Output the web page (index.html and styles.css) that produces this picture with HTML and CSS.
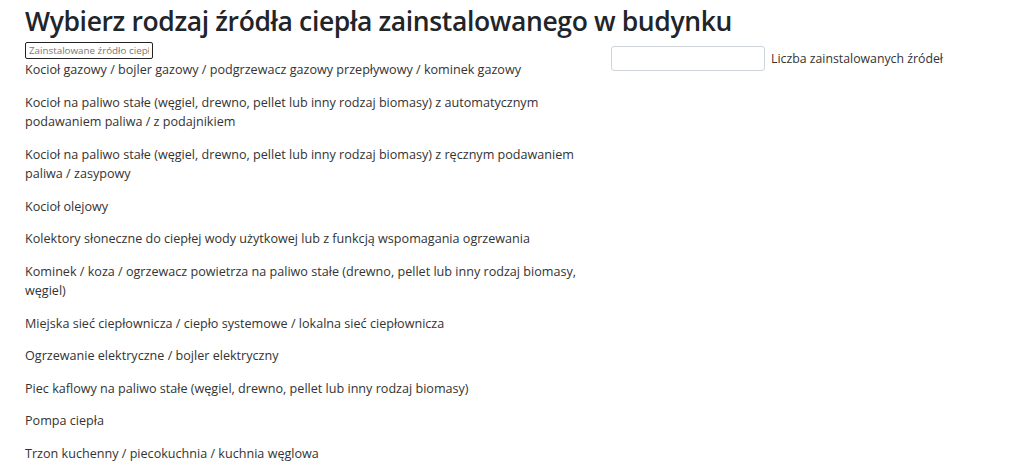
FILE: index.html
```html
<!DOCTYPE html>
<html lang="pl">
<head>
<meta charset="utf-8">
<link rel="stylesheet" href="styles.css">
</head>
<body>
<div class="page">
  <h1 class="title">Wybierz rodzaj źródła ciepła zainstalowanego w budynku</h1>
  <div class="row">
    <div class="col-left">
      <input class="search" type="text" placeholder="Zainstalowane źródło ciepła">
      <ul class="list">
        <li>Kocioł gazowy / bojler gazowy / podgrzewacz gazowy przepływowy / kominek gazowy</li>
        <li>Kocioł na paliwo stałe (węgiel, drewno, pellet lub inny rodzaj biomasy) z automatycznym podawaniem paliwa / z podajnikiem</li>
        <li>Kocioł na paliwo stałe (węgiel, drewno, pellet lub inny rodzaj biomasy) z ręcznym podawaniem paliwa / zasypowy</li>
        <li>Kocioł olejowy</li>
        <li>Kolektory słoneczne do ciepłej wody użytkowej lub z funkcją wspomagania ogrzewania</li>
        <li>Kominek / koza / ogrzewacz powietrza na paliwo stałe (drewno, pellet lub inny rodzaj biomasy, węgiel)</li>
        <li>Miejska sieć ciepłownicza / ciepło systemowe / lokalna sieć ciepłownicza</li>
        <li>Ogrzewanie elektryczne / bojler elektryczny</li>
        <li>Piec kaflowy na paliwo stałe (węgiel, drewno, pellet lub inny rodzaj biomasy)</li>
        <li>Pompa ciepła</li>
        <li>Trzon kuchenny / piecokuchnia / kuchnia węglowa</li>
      </ul>
    </div>
    <div class="col-right">
      <input class="count" type="text">
      <label class="count-label">Liczba zainstalowanych źródeł</label>
    </div>
  </div>
</div>
</body>
</html>
```
FILE: styles.css
```css
html, body {
  margin: 0;
  padding: 0;
  background: #ffffff;
}
body {
  font-family: "Open Sans", "Noto Sans", sans-serif;
  color: #212529;
}
.page {
  padding: 0 0 0 25px;
}
.title {
  margin: 0;
  padding-top: 4px;
  font-size: 26.5px;
  font-weight: 600;
  line-height: 34px;
  color: #212529;
  letter-spacing: -0.37px;
}
.row {
  display: flex;
  align-items: flex-start;
}
.col-left {
  width: 568px;
  flex: none;
}
.col-right {
  margin-left: 18px;
  padding-top: 8px;
  display: flex;
  align-items: center;
  gap: 6px;
}
.search {
  display: block;
  box-sizing: border-box;
  width: 128px;
  height: 17px;
  margin: 4px 0 1px;
  padding: 0 3px;
  border: 1px solid #222;
  border-radius: 2px;
  font-family: inherit;
  font-size: 9.8px;
  color: #333;
  outline: none;
}
.search::placeholder {
  color: #777;
}
.list {
  list-style: none;
  margin: 0;
  padding: 0;
  width: 585px;
}
.list li {
  font-size: 12.6px;
  line-height: 19.5px;
  margin-bottom: 13px;
  color: #333;
}
.count {
  box-sizing: border-box;
  width: 154px;
  height: 25px;
  border: 1px solid #ced4da;
  border-radius: 3px;
  padding: 0 6px;
  font-family: inherit;
  outline: none;
}
.count-label {
  font-size: 12.3px;
  color: #333;
}
```
